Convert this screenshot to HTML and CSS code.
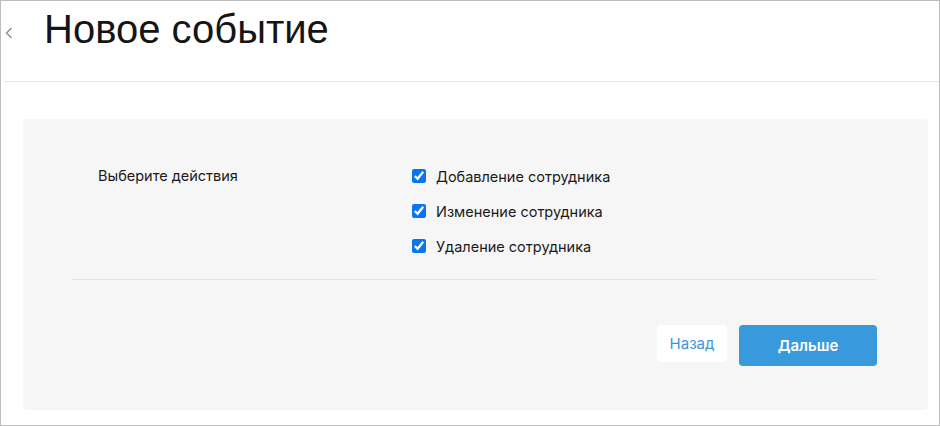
FILE: index.html
```html
<!DOCTYPE html>
<html lang="ru">
<head>
    <meta charset="UTF-8">
    <title>Новое событие</title>
    <link rel="stylesheet" href="styles.css">
</head>
<body>
    <div class="frame">
        <header class="page-header">
            <a class="back" href="#">
                <svg width="8" height="12" viewBox="0 0 8 12"><path d="M6.5 1 L1.5 6 L6.5 11" fill="none" stroke="#8a8a8a" stroke-width="1.3"/></svg>
            </a>
            <h1>Новое событие</h1>
        </header>

        <div class="panel">
            <div class="form-row">
                <div class="form-label">Выберите действия</div>
                <div class="checks">
                    <label class="check"><input type="checkbox" checked> Добавление сотрудника</label>
                    <label class="check"><input type="checkbox" checked> Изменение сотрудника</label>
                    <label class="check"><input type="checkbox" checked> Удаление сотрудника</label>
                </div>
            </div>
            <div class="divider"></div>
            <div class="actions">
                <button class="btn btn-back">Назад</button>
                <button class="btn btn-next">Дальше</button>
            </div>
        </div>
    </div>
</body>
</html>
```

FILE: styles.css
```css
* { margin: 0; padding: 0; box-sizing: border-box; }
body {
    font-family: Inter, "Liberation Sans", sans-serif;
    background: #fff;
    color: #1a1a1a;
}
.frame {
    width: 940px;
    height: 426px;
    border: 1px solid #bdbdbd;
}
.page-header {
    height: 81px;
    margin-left: 3px;
    border-bottom: 1px solid #e6e6e6;
    display: flex;
    align-items: flex-start;
}
.back { display: flex; margin: 26px 0 0 1px; width: 39px; }
.page-header h1 {
    font-family: "Liberation Sans", Arial, sans-serif;
    font-weight: normal;
    font-size: 40px;
    line-height: 44px;
    margin-top: 6px;
    color: #151515;
}
.panel {
    margin: 37px 11px 0 22px;
    height: 291px;
    background: #f6f6f6;
    border-radius: 4px;
    padding: 47px 51px 0 49px;
}
.form-row { display: flex; }
.form-label {
    font-size: 14.5px;
    line-height: 20px;
    padding: 0 0 0 26px;
    width: 340px;
}
.checks { display: flex; flex-direction: column; gap: 15px; }
.check {
    display: flex;
    align-items: center;
    font-size: 14.5px;
    height: 20px;
}
.check input {
    width: 14px;
    height: 14px;
    margin: 0 10px 0 0;
    accent-color: #0a75f0;
}
.divider {
    border-top: 1px solid #e4e4e4;
    margin-top: 23px;
}
.actions {
    display: flex;
    justify-content: flex-end;
    align-items: flex-start;
    gap: 12px;
    margin-top: 45px;
}
.btn {
    font-family: Inter, "Liberation Sans", sans-serif;
    font-size: 15px;
    border: none;
    border-radius: 4px;
    cursor: pointer;
}
.btn-back {
    background: #fff;
    color: #3a96d8;
    width: 70px;
    height: 37px;
}
.btn-next {
    background: #3899dc;
    color: #fff;
    font-weight: 600;
    width: 138px;
    height: 41px;
}
```
